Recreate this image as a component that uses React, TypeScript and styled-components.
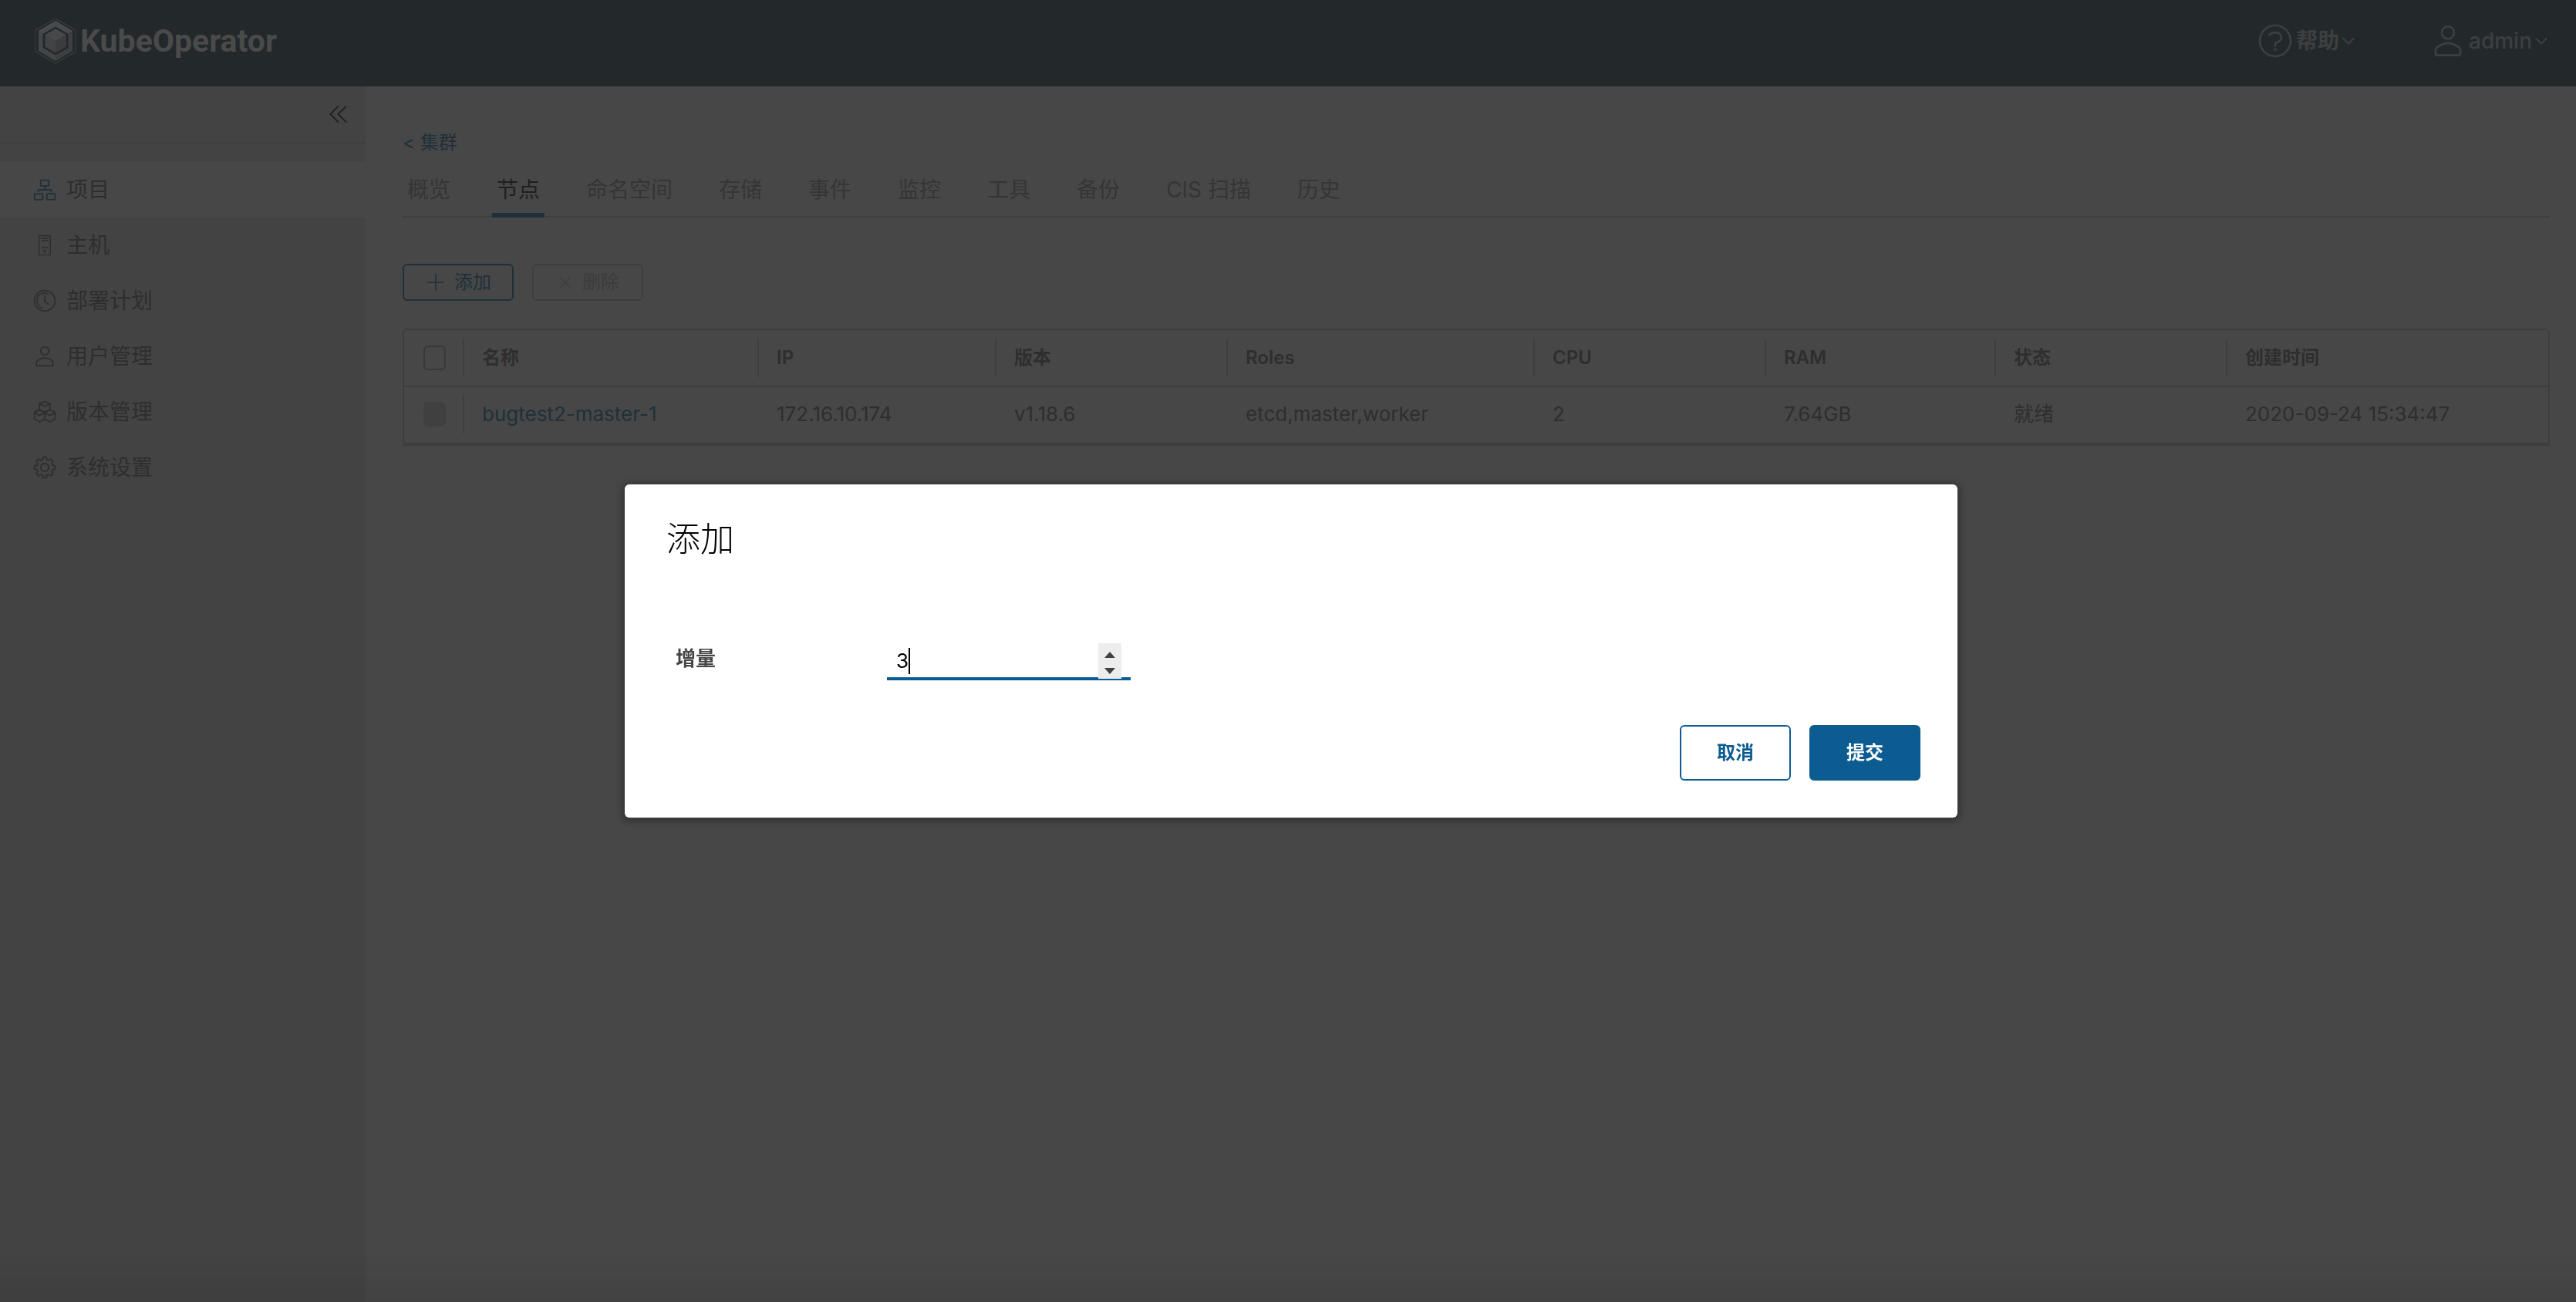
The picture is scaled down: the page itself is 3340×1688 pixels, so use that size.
import React, { useState } from "react";
import styled, { createGlobalStyle } from "styled-components";

const latin = `Inter, "Noto Sans CJK SC", "Noto Sans", sans-serif`;

const color = {
  page: "#474747",
  side: "#434343",
  sideLine: "#3e3e3e",
  header: "#23292b",
  headerText: "#3d3f40",
  brand: "#4a4a4a",
  text: "#2e2e2e",
  strong: "#1f1f1f",
  muted: "#353535",
  line: "#3e3e3e",
  faint: "#3c3c3c",
  link: "#20303a",
  action: "#0c5c91",
};

const GlobalStyle = createGlobalStyle`
  * { box-sizing: border-box; }
  html, body, #root { height: 100%; }
  body { margin: 0; background: ${color.page}; font-family: ${latin}; color: ${color.text}; }
  button, input { font-family: inherit; }
`;

const Shell = styled.div`
  display: flex;
  flex-direction: column;
  min-height: 100%;
`;

const Header = styled.header`
  display: flex;
  align-items: center;
  height: 112px;
  padding: 0 36px 6px 44px;
  background: ${color.header};
`;

const Brand = styled.a`
  display: flex;
  align-items: center;
  gap: 4px;
  margin-right: auto;
  color: ${color.brand};
  font: 700 41px/56px Roboto, sans-serif;
  text-decoration: none;
  svg { width: 56px; height: 60px; }
`;

const HeaderMenus = styled.div`
  display: flex;
  gap: 96px;
`;

const HeaderMenu = styled.button<{ $strong?: boolean }>`
  display: flex;
  align-items: center;
  gap: 3px;
  padding: 0;
  border: 0;
  background: none;
  color: ${color.headerText};
  font-size: 28px;
  line-height: 48px;
  font-weight: ${(p) => (p.$strong ? 600 : 500)};
`;

const Body = styled.div`
  display: flex;
  flex: 1;
`;

const Sidebar = styled.nav`
  flex: 0 0 474px;
  background: ${color.side};
`;

const CollapseRow = styled.div`
  display: flex;
  justify-content: flex-end;
  height: 74px;
  padding: 20px 20px 0 0;
  margin-bottom: 24px;
  border-bottom: 2px solid ${color.sideLine};
`;

const CollapseButton = styled.button`
  display: flex;
  width: 32px;
  height: 32px;
  padding: 0;
  border: 0;
  background: none;
  color: ${color.strong};
`;

const NavLink = styled.a<{ $active?: boolean }>`
  display: flex;
  align-items: center;
  gap: 12px;
  height: 72px;
  padding-left: 42px;
  font-size: 28px;
  line-height: 36px;
  color: ${color.text};
  text-decoration: none;
  background: ${(p) => (p.$active ? color.page : "transparent")};
  svg { color: ${(p) => (p.$active ? color.link : color.text)}; }
`;

const Main = styled.main`
  flex: 1;
  min-width: 0;
  padding: 54px 34px 0 48px;
`;

const BackLink = styled.a`
  display: block;
  width: max-content;
  font-size: 24px;
  line-height: 38px;
  color: ${color.link};
  text-decoration: none;
`;

const Tabs = styled.div`
  display: flex;
  gap: 48px;
  margin-top: 6px;
  box-shadow: inset 0 -2px ${color.line};
`;

const Tab = styled.button<{ $active: boolean }>`
  height: 72px;
  padding: 6px 6px 0;
  border: 0;
  border-bottom: 6px solid ${(p) => (p.$active ? color.link : "transparent")};
  background: none;
  font-size: 28px;
  line-height: 36px;
  color: ${(p) => (p.$active ? color.strong : color.muted)};
`;

const Toolbar = styled.div`
  display: flex;
  gap: 24px;
  margin: 60px 0 36px;
`;

const ToolButton = styled.button`
  display: flex;
  align-items: center;
  justify-content: center;
  gap: 10px;
  width: 144px;
  height: 48px;
  padding: 0;
  border: 2px solid ${color.link};
  border-radius: 6px;
  background: none;
  font-size: 24px;
  line-height: 36px;
  color: ${color.link};
  &:disabled { border-color: ${color.line}; color: ${color.faint}; }
`;

const Grid = styled.table`
  width: 100%;
  table-layout: fixed;
  border: 2px solid ${color.line};
  border-bottom-width: 4px;
  border-radius: 6px 6px 0 0;
  border-spacing: 0;
  text-align: left;
`;

const HeadCell = styled.th`
  height: 74px;
  padding: 0;
  border-bottom: 2px solid ${color.line};
  font-size: 24px;
  line-height: 50px;
  font-weight: 600;
`;

const Cell = styled.td`
  height: 72px;
  padding: 0 0 2px;
  font-size: 26px;
  line-height: 50px;
`;

const CellInner = styled.div<{ $divider?: boolean }>`
  display: flex;
  align-items: center;
  height: 50px;
  padding: 0 22px 0 23px;
  border-left: 2px solid ${(p) => (p.$divider ? color.line : "transparent")};
`;

const NodeLink = styled.a`
  color: ${color.link};
  text-decoration: none;
`;

const Check = styled.input`
  appearance: none;
  width: 32px;
  height: 32px;
  margin: 0;
  border: 2px solid #383838;
  border-radius: 6px;
  &:disabled { border-color: #404040; background: #404040; }
`;

const Backdrop = styled.div`
  position: fixed;
  inset: 0;
  display: flex;
  align-items: center;
  justify-content: center;
  padding-left: 8px;
  background: linear-gradient(to top, rgba(0, 0, 0, 0.06), transparent 64px);
`;

const Dialog = styled.form`
  width: 1728px;
  max-width: 96%;
  padding: 48px;
  border-radius: 6px;
  background: #fff;
  box-shadow: 0 2px 8px 4px rgba(0, 0, 0, 0.25);
`;

const DialogTitle = styled.h1`
  margin: 0 0 92px;
  padding-left: 6px;
  font-size: 44px;
  line-height: 46px;
  font-weight: 200;
  color: #000;
`;

const Field = styled.div`
  display: flex;
  align-items: flex-start;
  height: 68px;
  margin-bottom: 58px;
  padding: 20px 0 0 18px;
`;

const FieldLabel = styled.label`
  width: 274px;
  font-size: 26px;
  line-height: 40px;
  font-weight: 600;
  color: #454545;
`;

const NumberBox = styled.div`
  position: relative;
  width: 316px;
`;

const NumberInput = styled.input`
  display: block;
  width: 100%;
  height: 48px;
  padding: 0 44px 0 12px;
  border: 0;
  border-bottom: 4px solid ${color.action};
  outline: 0;
  background: none;
  font-size: 26px;
  color: #000;
  caret-color: transparent;
  appearance: textfield;
  &::-webkit-inner-spin-button { appearance: none; margin: 0; }
`;

const Caret = styled.span`
  position: absolute;
  left: 28px;
  top: 6px;
  width: 2px;
  height: 34px;
  background: #000;
`;

const Spinner = styled.div`
  position: absolute;
  right: 12px;
  top: 0;
  display: flex;
  flex-direction: column;
  width: 30px;
  height: 46px;
  padding: 4px 0 0;
  background: #ededed;
`;

const SpinButton = styled.button`
  display: flex;
  flex: 1;
  align-items: center;
  justify-content: center;
  padding: 0;
  border: 0;
  background: none;
  svg { width: 14px; height: 8px; fill: #404040; }
`;

const Actions = styled.div`
  display: flex;
  justify-content: flex-end;
  gap: 24px;
`;

const ActionButton = styled.button<{ $primary?: boolean }>`
  width: 144px;
  height: 72px;
  padding: 0;
  border: 2px solid ${color.action};
  border-radius: 6px;
  background: ${(p) => (p.$primary ? color.action : "#fff")};
  color: ${(p) => (p.$primary ? "#fff" : color.action)};
  font-size: 24px;
  line-height: 36px;
  font-weight: 600;
`;

const IconSvg = styled.svg<{ $size: number }>`
  flex: none;
  width: ${(p) => p.$size}px;
  height: ${(p) => p.$size}px;
  fill: none;
  stroke: currentColor;
  stroke-width: 2;
`;

const gearPath = (() => {
  const points: string[] = [];
  for (let i = 0; i < 8; i++) {
    const mid = (i * Math.PI) / 4 - Math.PI / 2;
    [[-0.24, 12], [-0.15, 15.2], [0.15, 15.2], [0.24, 12]].forEach(([da, r]) => {
      points.push(`${(18 + r * Math.cos(mid + da)).toFixed(2)},${(18 + r * Math.sin(mid + da)).toFixed(2)}`);
    });
  }
  return `M${points.join("L")}Z`;
})();

const shapes = {
  org: (
    <>
      <rect x="12" y="4" width="12" height="8.4" rx="0.6" />
      <rect x="3" y="24" width="12" height="8.4" rx="0.6" />
      <rect x="21" y="24" width="12" height="8.4" rx="0.6" />
      <path d="M18 12.4V18M8.6 21.6V18h18.8v3.6" />
    </>
  ),
  host: (
    <>
      <rect x="9.8" y="4" width="16.4" height="28" strokeWidth="1.6" />
      <path d="M12.4 7.6h11.2M12.4 11.2h11.2M13.5 21h9" strokeWidth="1.6" />
      <circle cx="18" cy="26.6" r="1.7" strokeWidth="1.4" />
    </>
  ),
  clock: (
    <>
      <circle cx="18" cy="18" r="15" />
      <path d="M18 9.8v9.6l6 3.8" />
      <path d="M23.6 8.3A11.2 11.2 0 1 0 15.6 28.9" strokeWidth="1.5" />
    </>
  ),
  user: (
    <>
      <circle cx="18" cy="10" r="6" />
      <path d="M6 25.7a16.2 16.2 0 0 1 24 0V31a1 1 0 0 1-1 1H7a1 1 0 0 1-1-1Z" />
    </>
  ),
  bundle: (
    <g strokeLinejoin="round">
      <path d="M10.3 6 18 2.9 25.7 6v9L18 18.4 10.3 15ZM10.3 6 18 9.8 25.7 6" />
      <path d="M10.3 15 3 18.4v10.2l7.5 3.8 7.5-3.8V18.4ZM3 19.4l7.5 3.7 7.5-3.7" />
      <path d="M25.7 15 33 18.4v10.2l-7.5 3.8-7.5-3.8M33 19.4l-7.5 3.7-7.5-3.7" />
    </g>
  ),
  gear: (
    <>
      <path d={gearPath} strokeLinejoin="round" />
      <circle cx="18" cy="18" r="5.8" />
    </>
  ),
  help: (
    <>
      <circle cx="18" cy="18" r="15" />
      <path d="M12.4 12.2c1.3-1.4 3.2-2.4 5.4-2.4 3.4 0 6.1 1.9 6.1 5s-2.6 4.6-5.9 5.1v3.1" strokeLinecap="round" />
      <circle cx="18" cy="26.4" r="1.3" fill="currentColor" stroke="none" />
    </>
  ),
  collapse: <path d="M19 6 7 18l12 12M30.5 6l-12 12 12 12" />,
  plus: <path d="M18 4v28M4 18h28" />,
  times: <path d="M8 8l20 20M28 8 8 28" />,
  caret: <path d="M4 11l14 14 14-14" strokeWidth="4" />,
};

function Icon({ name, size = 32 }: { name: keyof typeof shapes; size?: number }) {
  return (
    <IconSvg $size={size} viewBox="0 0 36 36" aria-hidden="true">
      {shapes[name]}
    </IconSvg>
  );
}

function Logo() {
  return (
    <svg viewBox="0 0 56 60" aria-hidden="true">
      <path d="M28 1 54 16v28L28 59 2 44V16Z" fill="none" stroke="#33383a" strokeWidth="1.5" />
      <path d="M28 4 50 17v26L28 56 6 43V17Z" fill="#444546" />
      <path d="M28 4 50 17l-6 3.5L28 11.5 12 20.5 6 17Z" fill="#4a4a4a" />
      <path d="M50 17v26L28 56v-7.5l16-9v-19Z" fill="#3c3e3f" />
      <path d="M28 11.5 44.5 21v18L28 48.5 11.5 39V21Z" fill="#23292b" />
      <path d="M28 14.5 41.5 22v15.5L28 45.5 14.5 37.5V22Z" fill="#424344" />
      <path d="M28 14.5 41.5 22 28 30 14.5 22Z" fill="#484848" />
      <path d="M41.5 22v15.5L28 45.5V30Z" fill="#3a3c3d" />
    </svg>
  );
}

const navItems: { icon: keyof typeof shapes; label: string }[] = [
  { icon: "org", label: "项目" },
  { icon: "host", label: "主机" },
  { icon: "clock", label: "部署计划" },
  { icon: "user", label: "用户管理" },
  { icon: "bundle", label: "版本管理" },
  { icon: "gear", label: "系统设置" },
];

const tabs = ["概览", "节点", "命名空间", "存储", "事件", "监控", "工具", "备份", "CIS 扫描", "历史"];

const columns = [
  { label: "名称", width: 382 },
  { label: "IP", width: 308 },
  { label: "版本", width: 300 },
  { label: "Roles", width: 398 },
  { label: "CPU", width: 300 },
  { label: "RAM", width: 298 },
  { label: "状态", width: 300 },
  { label: "创建时间", width: 418 },
];

const nodes = [
  ["bugtest2-master-1", "172.16.10.174", "v1.18.6", "etcd,master,worker", "2", "7.64GB", "就绪", "2020-09-24 15:34:47"],
];

function NodeTable() {
  return (
    <Grid>
      <colgroup>
        <col style={{ width: 76 }} />
        {columns.map((c) => (
          <col key={c.label} style={{ width: c.width }} />
        ))}
      </colgroup>
      <thead>
        <tr>
          <HeadCell>
            <CellInner>
              <Check type="checkbox" aria-label="全选" />
            </CellInner>
          </HeadCell>
          {columns.map((c) => (
            <HeadCell key={c.label} scope="col">
              <CellInner $divider>{c.label}</CellInner>
            </HeadCell>
          ))}
        </tr>
      </thead>
      <tbody>
        {nodes.map((row) => (
          <tr key={row[0]}>
            <Cell>
              <CellInner>
                <Check type="checkbox" disabled aria-label={row[0]} />
              </CellInner>
            </Cell>
            {row.map((value, i) => (
              <Cell key={columns[i].label}>
                <CellInner $divider={i === 0}>
                  {i === 0 ? <NodeLink href="#node">{value}</NodeLink> : value}
                </CellInner>
              </Cell>
            ))}
          </tr>
        ))}
      </tbody>
    </Grid>
  );
}

function AddNodeDialog() {
  const [amount, setAmount] = useState(3);
  return (
    <Backdrop>
      <Dialog role="dialog" aria-modal="true" aria-labelledby="dialog-title" onSubmit={(e) => e.preventDefault()}>
        <DialogTitle id="dialog-title">添加</DialogTitle>
        <Field>
          <FieldLabel htmlFor="amount">增量</FieldLabel>
          <NumberBox>
            <NumberInput
              id="amount"
              type="number"
              value={amount}
              onChange={(e) => setAmount(Number(e.target.value))}
            />
            <Caret />
            <Spinner>
              <SpinButton type="button" aria-label="增加" onClick={() => setAmount(amount + 1)}>
                <svg viewBox="0 0 14 8"><path d="M0 8 7 0l7 8Z" /></svg>
              </SpinButton>
              <SpinButton type="button" aria-label="减少" onClick={() => setAmount(amount - 1)}>
                <svg viewBox="0 0 14 8"><path d="M0 0h14L7 8Z" /></svg>
              </SpinButton>
            </Spinner>
          </NumberBox>
        </Field>
        <Actions>
          <ActionButton type="button">取消</ActionButton>
          <ActionButton type="submit" $primary>提交</ActionButton>
        </Actions>
      </Dialog>
    </Backdrop>
  );
}

export default function App() {
  return (
    <>
      <GlobalStyle />
      <Shell>
        <Header>
          <Brand href="#home">
            <Logo />
            KubeOperator
          </Brand>
          <HeaderMenus>
            <HeaderMenu type="button" $strong>
              <Icon name="help" size={48} />
              帮助
              <Icon name="caret" size={18} />
            </HeaderMenu>
            <HeaderMenu type="button">
              <Icon name="user" size={48} />
              admin
              <Icon name="caret" size={18} />
            </HeaderMenu>
          </HeaderMenus>
        </Header>
        <Body>
          <Sidebar>
            <CollapseRow>
              <CollapseButton type="button" aria-label="收起">
                <Icon name="collapse" />
              </CollapseButton>
            </CollapseRow>
            {navItems.map((item, i) => (
              <NavLink key={item.label} href={`#${item.icon}`} $active={i === 0}>
                <Icon name={item.icon} />
                {item.label}
              </NavLink>
            ))}
          </Sidebar>
          <Main>
            <BackLink href="#clusters">&lt; 集群</BackLink>
            <Tabs role="tablist">
              {tabs.map((label) => (
                <Tab key={label} type="button" role="tab" aria-selected={label === "节点"} $active={label === "节点"}>
                  {label}
                </Tab>
              ))}
            </Tabs>
            <Toolbar>
              <ToolButton type="button">
                <Icon name="plus" size={28} />
                添加
              </ToolButton>
              <ToolButton type="button" disabled>
                <Icon name="times" size={24} />
                删除
              </ToolButton>
            </Toolbar>
            <NodeTable />
          </Main>
        </Body>
      </Shell>
      <AddNodeDialog />
    </>
  );
}
